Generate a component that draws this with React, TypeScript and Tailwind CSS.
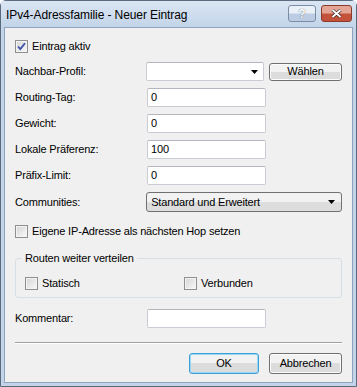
import React from "react";

const font = { fontFamily: '"Liberation Sans", Arial, sans-serif' };

function Check({ checked = false }: { checked?: boolean }) {
  return (
    <span className="inline-flex h-[13px] w-[13px] shrink-0 items-center justify-center border border-[#8f8f8f] bg-gradient-to-br from-[#dcdcdc] to-[#fbfbfb]">
      <span className="flex h-[11px] w-[11px] items-center justify-center border border-[#f4f4f4] bg-gradient-to-br from-[#d8d8d8] to-[#f6f6f6]">
        {checked && (
          <svg width="9" height="9" viewBox="0 0 9 9">
            <path d="M1 4.5 L3.3 7 L8 1.2" fill="none" stroke="#3a4fa8" strokeWidth="1.8" />
          </svg>
        )}
      </span>
    </span>
  );
}

function TextBox({ value = "" }: { value?: string }) {
  return (
    <div className="flex h-[19px] w-[119px] items-center rounded-[2px] border border-[#c9ccd2] border-t-[#b3b6bc] bg-white px-[3px] text-black">
      {value}
    </div>
  );
}

function Arrow() {
  return (
    <svg width="7" height="4" viewBox="0 0 7 4">
      <path d="M0 0 H7 L3.5 4 Z" fill="#000" />
    </svg>
  );
}

function Btn({ label, w, h, focused = false }: { label: string; w: string; h: string; focused?: boolean }) {
  return (
    <div
      className={`${w} ${h} flex items-center justify-center rounded-[3px] border ${
        focused ? "border-[#3c9fd6] shadow-[inset_0_0_0_1px_#98d8f4]" : "border-[#707070] shadow-[inset_0_0_0_1px_#fcfcfc]"
      } bg-gradient-to-b from-[#f2f2f2] from-50% to-[#dcdcdc] to-50% text-black`}
    >
      {label}
    </div>
  );
}

function Row({ label, children, mt }: { label: string; children: React.ReactNode; mt: string }) {
  return (
    <div className={`${mt} flex items-center`}>
      <span className="w-[132px]">{label}</span>
      {children}
    </div>
  );
}

export default function App() {
  return (
    <div style={font} className="h-[387px] w-[357px] overflow-hidden bg-white">
      <div className="flex h-[387px] w-[357px] flex-col rounded-t-[6px] border border-[#5b6b7e] bg-[#c3d4e9]">
        {/* Title bar */}
        <div className="flex h-[26px] shrink-0 items-center justify-between bg-gradient-to-b from-[#dbe6f3] to-[#c3d4e9] pl-[5px] pr-[4px]">
          <span className="pt-[1px] text-[12px] tracking-[-0.1px] text-black">IPv4-Adressfamilie - Neuer Eintrag</span>
          <div className="flex items-center gap-[5px] self-start pt-[4px]">
            <div className="flex h-[17px] w-[28px] items-center justify-center rounded-[3px] border border-[#7b8da5] bg-gradient-to-b from-[#e9f0f8] from-45% to-[#bccde3] to-55% text-[12px] font-bold text-white [text-shadow:0_0_1px_#334]">
              ?
            </div>
            <div className="flex h-[17px] w-[31px] items-center justify-center rounded-[3px] border border-[#8a3a2c] bg-gradient-to-b from-[#e5a595] from-45% to-[#c4523a] to-55%">
              <svg width="11" height="9" viewBox="0 0 11 9">
                <path d="M1.5 1 L9.5 8 M9.5 1 L1.5 8" stroke="#3a2a2a" strokeWidth="3.2" />
                <path d="M1.5 1 L9.5 8 M9.5 1 L1.5 8" stroke="#fff" strokeWidth="1.8" />
              </svg>
            </div>
          </div>
        </div>
        {/* Client */}
        <div className="mx-[3px] mb-[3px] flex flex-1 flex-col border border-[#8ea3bd] bg-[#f0f0f0] px-[10px] text-[11px] leading-[13px] tracking-[-0.17px] text-black">
          <div className="mt-[12px] flex h-[13px] items-center gap-[4px]">
            <Check checked />
            <span>Eintrag aktiv</span>
          </div>

          <Row label="Nachbar-Profil:" mt="mt-[9px]">
            <div className="flex h-[19px] w-[119px] items-center justify-end rounded-[2px] border border-[#c9ccd2] border-t-[#b3b6bc] bg-white pr-[5px]">
              <Arrow />
            </div>
            <div className="ml-[5px]">
              <Btn label="Wählen" w="w-[73px]" h="h-[18px]" />
            </div>
          </Row>

          <Row label="Routing-Tag:" mt="mt-[7px]">
            <TextBox value="0" />
          </Row>
          <Row label="Gewicht:" mt="mt-[7px]">
            <TextBox value="0" />
          </Row>
          <Row label="Lokale Präferenz:" mt="mt-[7px]">
            <TextBox value="100" />
          </Row>
          <Row label="Präfix-Limit:" mt="mt-[7px]">
            <TextBox value="0" />
          </Row>

          <Row label="Communities:" mt="mt-[7px]">
            <div className="flex h-[20px] w-[197px] items-center justify-between rounded-[3px] border border-[#707070] bg-gradient-to-b from-[#f2f2f2] from-50% to-[#dddddd] to-50% pl-[4px] pr-[6px]">
              <span>Standard und Erweitert</span>
              <Arrow />
            </div>
          </Row>

          <div className="mt-[13px] flex h-[13px] items-center gap-[4px]">
            <Check />
            <span>Eigene IP-Adresse als nächsten Hop setzen</span>
          </div>

          <div className="relative mt-[20px] h-[40px] rounded-[3px] border border-[#d5dfe5]">
            <span className="absolute left-[6px] top-[-7px] bg-[#f0f0f0] px-[3px]">Routen weiter verteilen</span>
            <div className="flex h-[13px] items-center pl-[9px] mt-[18px]">
              <div className="flex w-[159px] items-center gap-[4px]">
                <Check />
                <span>Statisch</span>
              </div>
              <div className="flex items-center gap-[4px]">
                <Check />
                <span>Verbunden</span>
              </div>
            </div>
          </div>

          <Row label="Kommentar:" mt="mt-[11px]">
            <TextBox />
          </Row>

          <div className="mt-[14px] h-px bg-[#a0a0a0] shadow-[0_1px_0_#fff]" />

          <div className="mt-[10px] flex justify-end gap-[10px]">
            <Btn label="OK" w="w-[70px]" h="h-[21px]" focused />
            <Btn label="Abbrechen" w="w-[73px]" h="h-[21px]" />
          </div>
        </div>
      </div>
    </div>
  );
}
